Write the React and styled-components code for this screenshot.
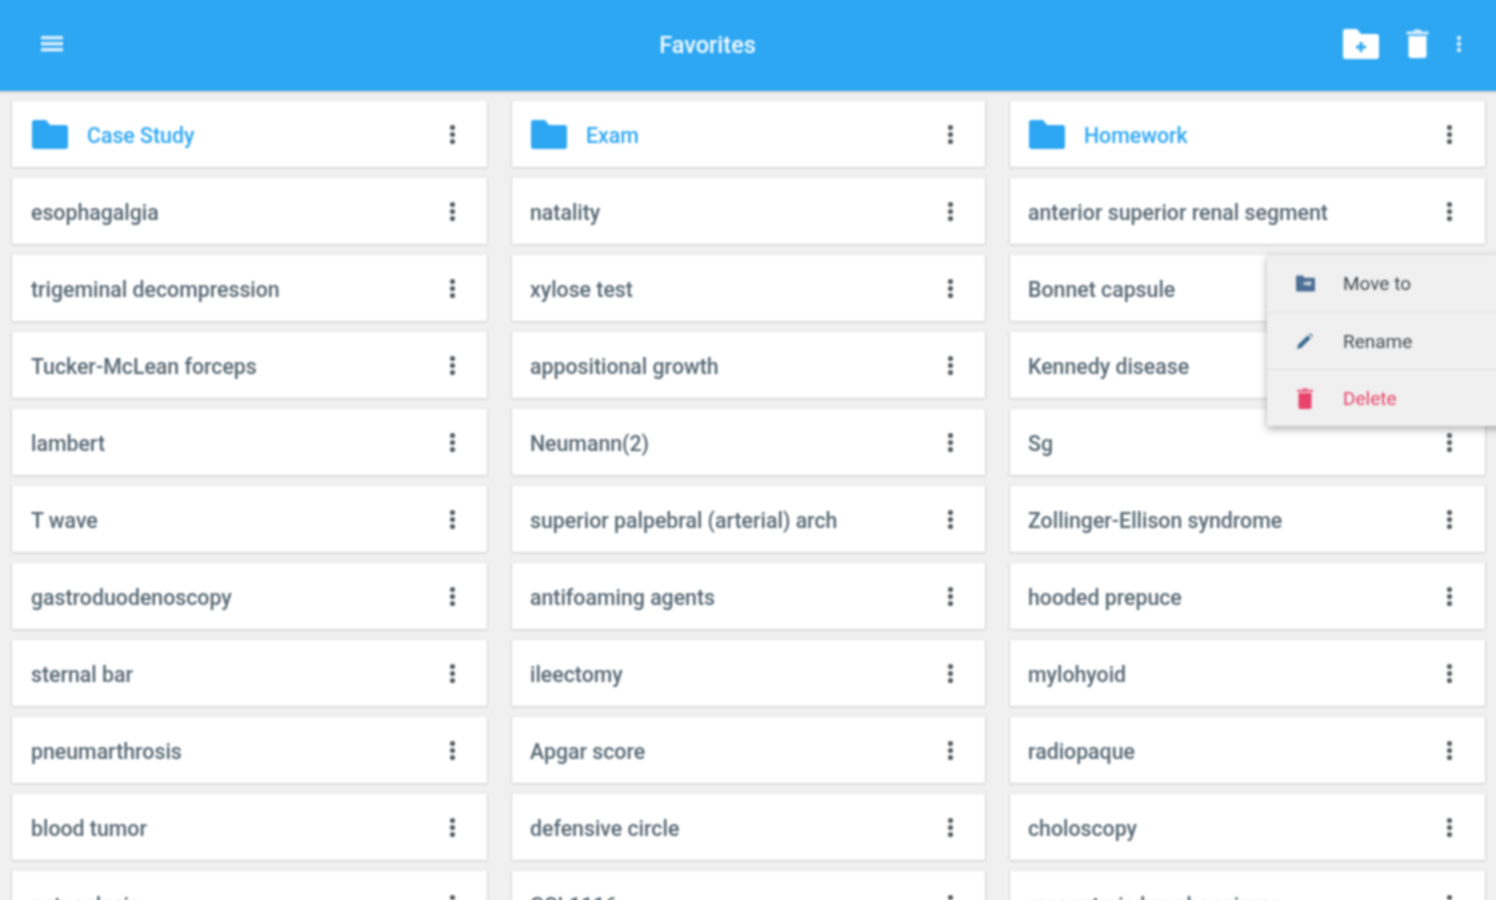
import React from "react"
import styled, { createGlobalStyle } from "styled-components"

const GlobalStyle = createGlobalStyle`
	html, body {
		margin: 0;
		padding: 0;
		height: 100%;
		overflow: hidden;
		background: #f0f0f0;
	}
`;

const Frame = styled.div`
	width: 1496px;
	height: 900px;
	overflow: hidden;
`;

/* the blur fades out at its own edges, so this bleeds 8px past the frame */
const Page = styled.div`
	position: relative;
	width: 1496px;
	height: 900px;
	margin: -8px;
	padding: 8px;
	overflow: hidden;
	background: #f0f0f0;
	font-family: Roboto, "Liberation Sans", sans-serif;
	filter: blur(0.9px);
`;

const Toolbar = styled.header`
	display: flex;
	align-items: center;
	height: 99px;
	box-sizing: border-box;
	margin: -8px -8px 0;
	padding: 8px 42px 4px 49px;
	background: #2ea7f2;
	box-shadow: 0 1px 3px rgba(0, 0, 0, 0.2);
`;

const Title = styled.h1`
	flex: 1;
	margin: 0;
	padding: 2px 0 0 9px;
	text-align: center;
	color: #f2faff;
	font-size: 23.5px;
	font-weight: 500;
`;

const ToolIcons = styled.div`
	display: flex;
	align-items: center;
	gap: 27px;
`;

const Grid = styled.main`
	display: grid;
	grid-template-columns: 475px 473px 475px;
	column-gap: 25px;
	row-gap: 11px;
	padding: 10px 11px 0 12px;
`;

const Card = styled.div`
	display: flex;
	align-items: center;
	height: 66px;
	box-sizing: border-box;
	padding: 0 ${p => (p.$first ? "31px" : "32px")} 0 ${p => p.$inset}px;
	background: #fff;
	box-shadow: 0 1px 2px rgba(0, 0, 0, 0.14), -1px 0 1px rgba(0, 0, 0, 0.07), 1px 0 1px rgba(0, 0, 0, 0.07);
`;

const Label = styled.span`
	flex: 1;
	margin-left: ${p => (p.$folder ? "19px" : "0")};
	padding-top: 2px;
	color: ${p => (p.$folder ? "#2ea7f2" : "#566773")};
	font-size: 21.3px;
	font-weight: 500;
	white-space: nowrap;
`;

const Menu = styled.div`
	position: absolute;
	top: 263px;
	left: 1275px;
	width: 240px;
	background: #f0f0f0;
	box-shadow: 0 3px 8px rgba(0, 0, 0, 0.32);
`;

const MenuRow = styled.div`
	display: flex;
	align-items: center;
	gap: 28px;
	height: 57px;
	box-sizing: border-box;
	padding-left: 28px;
	& + & {
		border-top: 1px solid #dfdfdf;
	}
`;

const MenuIcon = styled.span`
	display: flex;
	justify-content: center;
	width: 20px;
`;

const MenuLabel = styled.span`
	color: ${p => (p.$danger ? "#e8436a" : "#44494e")};
	font-size: 19px;
`;

const Dots = ({ color = "#54595e", width = 7, height = 21 }) => (
	<svg width={width} height={height} viewBox="0 0 8 24" fill={color}>
		<circle cx="4" cy="4" r="2.9" />
		<circle cx="4" cy="12" r="2.9" />
		<circle cx="4" cy="20" r="2.9" />
	</svg>
);

const Hamburger = () => (
	<svg width="22" height="18" viewBox="0 0 22 18" fill="#d9effd">
		<rect y="1" width="22" height="3.4" />
		<rect y="7" width="22" height="3.4" />
		<rect y="13" width="22" height="3.4" />
	</svg>
);

const FolderIcon = () => (
	<svg width="36" height="29" viewBox="0 0 36 29" fill="#2ea7f2">
		<path d="M0 2.5C0 1 1 0 2.5 0H14l4 5h15.5C35 5 36 6 36 7.5v19c0 1.5-1 2.5-2.5 2.5h-31C1 29 0 28 0 26.5z" />
	</svg>
);

const FolderPlus = () => (
	<svg width="36" height="30" viewBox="0 0 36 30">
		<path fill="#fff" d="M0 2.5C0 1 1 0 2.5 0H14l4 5h15.5C35 5 36 6 36 7.5v20c0 1.5-1 2.5-2.5 2.5h-31C1 30 0 29 0 27.5z" />
		<path fill="#2ea7f2" d="M16.5 13h3v3.5H23v3h-3.500V23h-3v-3.500H13v-3h3.500z" />
	</svg>
);

const TrashIcon = ({ color = "#fff", width = 23, height = 29 }) => (
	<svg width={width} height={height} viewBox="0 0 22 29" fill={color}>
		<path d="M0 2.5h7L8 .5h6l1 2h7V5.500H0z" opacity="0.8" />
		<path d="M2 7h18v19.500c0 1.500-1 2.500-2.500 2.500h-13C3 29 2 28 2 26.500z" />
	</svg>
);

const MoveIcon = () => (
	<svg width="19" height="17" viewBox="0 0 20 17">
		<path fill="#4f7096" d="M0 1.5C0 .5.5 0 1.5 0H7l2 2.500h9.500c1 0 1.500.5 1.500 1.500v11.500c0 1-.5 1.500-1.500 1.500h-17C.5 17 0 16.500 0 15.500z" />
		<path fill="#c8d3df" d="M8 7h5V5l4 3.500-4 3.500v-2H8z" />
	</svg>
);

const PencilIcon = () => (
	<svg width="18" height="18" viewBox="0 0 20 20" fill="#3d6d8f">
		<path d="M1 19l1.500-5L13 3.500l3.500 3.500L6 17.500z" />
		<path d="M14.500 2l1-1 3.500 3.500-1 1z" />
	</svg>
);

const columns = [
	{
		folder: "Case Study",
		inset: 19,
		folderInset: 20,
		items: ["esophagalgia", "trigeminal decompression", "Tucker-McLean forceps", "lambert", "T wave", "gastroduodenoscopy", "sternal bar", "pneumarthrosis", "blood tumor", "osteoclasis"],
	},
	{
		folder: "Exam",
		inset: 18,
		folderInset: 19,
		items: ["natality", "xylose test", "appositional growth", "Neumann(2)", "superior palpebral (arterial) arch", "antifoaming agents", "ileectomy", "Apgar score", "defensive circle", "GSL1116"],
	},
	{
		folder: "Homework",
		inset: 18,
		folderInset: 19,
		items: ["anterior superior renal segment", "Bonnet capsule", "Kennedy disease", "Sg", "Zollinger-Ellison syndrome", "hooded prepuce", "mylohyoid", "radiopaque", "choloscopy", "mesenteric lymphangioma"],
	},
];

const rows = [0, 1, 2, 3, 4, 5, 6, 7, 8, 9, 10];

const App = () => {
	return (
		<Frame>
			<GlobalStyle />
			<Page>
				<Toolbar>
					<Hamburger />
					<Title>Favorites</Title>
					<ToolIcons>
						<FolderPlus />
						<TrashIcon />
						<Dots color="#d9effd" width={6} height={18} />
					</ToolIcons>
				</Toolbar>
				<Grid>
					{rows.map(row =>
						columns.map((col, i) => (
							<Card key={col.folder + row} $first={i < 2} $inset={row === 0 ? col.folderInset : col.inset}>
								{row === 0 && <FolderIcon />}
								<Label $folder={row === 0}>{row === 0 ? col.folder : col.items[row - 1]}</Label>
								<Dots />
							</Card>
						))
					)}
				</Grid>
				<Menu>
					<MenuRow>
						<MenuIcon><MoveIcon /></MenuIcon>
						<MenuLabel>Move to</MenuLabel>
					</MenuRow>
					<MenuRow>
						<MenuIcon><PencilIcon /></MenuIcon>
						<MenuLabel>Rename</MenuLabel>
					</MenuRow>
					<MenuRow>
						<MenuIcon><TrashIcon color="#e8436a" width={16} height={21} /></MenuIcon>
						<MenuLabel $danger>Delete</MenuLabel>
					</MenuRow>
				</Menu>
			</Page>
		</Frame>
	)
}

export default App
